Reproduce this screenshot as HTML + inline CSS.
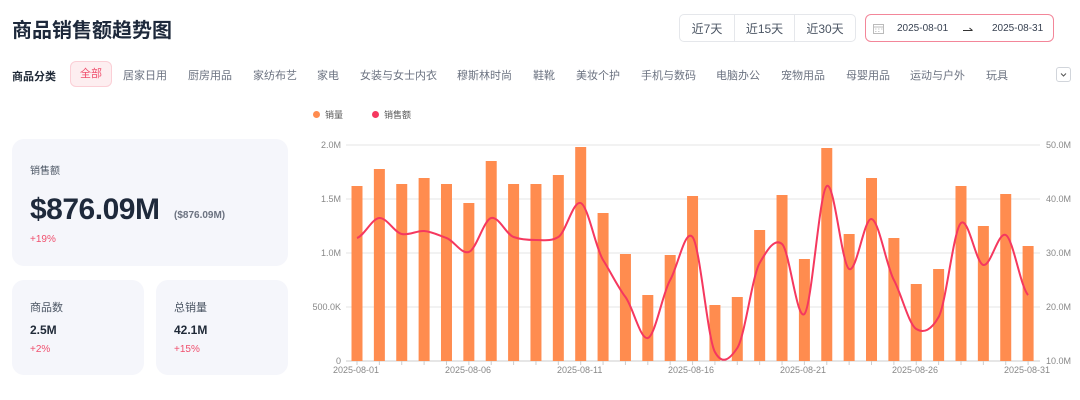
<!DOCTYPE html>
<html><head><meta charset="utf-8">
<style>
*{margin:0;padding:0;box-sizing:border-box}
body{width:1080px;height:400px;background:#fff;font-family:"Liberation Sans","Noto Sans CJK SC",sans-serif;position:relative;overflow:hidden;color:#1f2937}
.abs{position:absolute}
.title{left:12px;top:14px;font-size:20px;font-weight:bold;color:#1e293b}
.btns{left:679px;top:14px;width:177px;height:28px;border:1px solid #e5e7eb;border-radius:5px;display:flex;font-size:12px;color:#4b5563}
.btns div{display:flex;align-items:center;justify-content:center;border-right:1px solid #e5e7eb}
.btns div:last-child{border-right:none}
.date{left:865px;top:14px;width:189px;height:28px;border:1px solid #f38699;border-radius:6px;font-size:10px;color:#374151}
.cats{top:67px;font-size:11px;color:#6b7280}
.card{background:#f5f6fb;border-radius:12px}
.lbl{font-size:11px;color:#4b5563}
.red{color:#f0506e;font-size:10px}
.ax{font-size:9px;color:#888}
</style></head><body>
<div class="abs title">商品销售额趋势图</div>
<div class="abs btns"><div style="width:55px">近7天</div><div style="width:60px">近15天</div><div style="width:60px">近30天</div></div>
<div class="abs date">
<svg class="abs" style="left:7px;top:8px" width="11" height="11" viewBox="0 0 11 11"><rect x="0.5" y="1.5" width="10" height="9" fill="none" stroke="#bbb"/><line x1="0.5" y1="4" x2="10.5" y2="4" stroke="#bbb"/><g fill="#ccc"><rect x="2" y="5.5" width="1.5" height="1"/><rect x="5" y="5.5" width="1.5" height="1"/><rect x="8" y="5.5" width="1.5" height="1"/><rect x="2" y="8" width="1.5" height="1"/><rect x="5" y="8" width="1.5" height="1"/></g></svg>
<span class="abs" style="left:31px;top:8px">2025-08-01</span>
<svg class="abs" style="left:97px;top:11px" width="10" height="6" viewBox="0 0 10 6"><path d="M0 4.5H9.5M6.5 2L9.5 4.5" fill="none" stroke="#333" stroke-width="1"/></svg>
<span class="abs" style="left:126px;top:8px">2025-08-31</span>
</div>

<div class="abs cats" style="left:12px;font-weight:bold;color:#1f2937;top:68px">商品分类</div>
<div class="abs" style="left:70px;top:61px;width:42px;height:26px;background:#fdeef0;border:1px solid #fbcfd6;border-radius:6px;color:#f0506e;font-size:11px;text-align:center;line-height:24px">全部</div>
<div class="abs cats" style="left:123px">居家日用</div>
<div class="abs cats" style="left:188px">厨房用品</div>
<div class="abs cats" style="left:253px">家纺布艺</div>
<div class="abs cats" style="left:317px">家电</div>
<div class="abs cats" style="left:360px">女装与女士内衣</div>
<div class="abs cats" style="left:457px">穆斯林时尚</div>
<div class="abs cats" style="left:533px">鞋靴</div>
<div class="abs cats" style="left:576px">美妆个护</div>
<div class="abs cats" style="left:641px">手机与数码</div>
<div class="abs cats" style="left:716px">电脑办公</div>
<div class="abs cats" style="left:781px">宠物用品</div>
<div class="abs cats" style="left:846px">母婴用品</div>
<div class="abs cats" style="left:910px">运动与户外</div>
<div class="abs cats" style="left:986px">玩具</div>
<div class="abs" style="left:1056px;top:67px;width:15px;height:15px;border:1px solid #d1d5db;border-radius:3px"><svg width="13" height="13" viewBox="0 0 13 13"><path d="M4 5.5l2.5 2.5 2.5-2.5" fill="none" stroke="#555" stroke-width="1"/></svg></div>

<div class="abs card" style="left:12px;top:139px;width:276px;height:127px"></div>
<div class="abs lbl" style="left:30px;top:162px;font-size:10px">销售额</div>
<div class="abs" style="left:30px;top:193px;font-size:30px;font-weight:bold;color:#1e293b;letter-spacing:-0.5px">$876.09M</div>
<div class="abs" style="left:174px;top:210px;font-size:10px;font-weight:bold;color:#6b7280">($876.09M)</div>
<div class="abs red" style="left:30px;top:234px">+19%</div>

<div class="abs card" style="left:12px;top:280px;width:132px;height:95px"></div>
<div class="abs lbl" style="left:30px;top:299px">商品数</div>
<div class="abs" style="left:30px;top:323px;font-size:12px;font-weight:bold">2.5M</div>
<div class="abs red" style="left:30px;top:344px">+2%</div>
<div class="abs card" style="left:156px;top:280px;width:132px;height:95px"></div>
<div class="abs lbl" style="left:174px;top:299px">总销量</div>
<div class="abs" style="left:174px;top:323px;font-size:12px;font-weight:bold">42.1M</div>
<div class="abs red" style="left:174px;top:344px">+15%</div>

<div class="abs" style="left:313px;top:111px;width:7px;height:7px;border-radius:50%;background:#ff8c4f"></div>
<div class="abs" style="left:325px;top:108px;font-size:9px;color:#555">销量</div>
<div class="abs" style="left:372px;top:111px;width:7px;height:7px;border-radius:50%;background:#f5385f"></div>
<div class="abs" style="left:384px;top:108px;font-size:9px;color:#555">销售额</div>

<div class="abs ax" style="left:300px;top:140px;width:41px;text-align:right">2.0M</div>
<div class="abs ax" style="left:300px;top:194px;width:41px;text-align:right">1.5M</div>
<div class="abs ax" style="left:300px;top:248px;width:41px;text-align:right">1.0M</div>
<div class="abs ax" style="left:300px;top:302px;width:41px;text-align:right">500.0K</div>
<div class="abs ax" style="left:300px;top:356px;width:41px;text-align:right">0</div>
<div class="abs ax" style="left:1046px;top:140px">50.0M</div>
<div class="abs ax" style="left:1046px;top:194px">40.0M</div>
<div class="abs ax" style="left:1046px;top:248px">30.0M</div>
<div class="abs ax" style="left:1046px;top:302px">20.0M</div>
<div class="abs ax" style="left:1046px;top:356px">10.0M</div>
<div class="abs ax" style="left:333px;top:365px">2025-08-01</div>
<div class="abs ax" style="left:445px;top:365px">2025-08-06</div>
<div class="abs ax" style="left:557px;top:365px">2025-08-11</div>
<div class="abs ax" style="left:668px;top:365px">2025-08-16</div>
<div class="abs ax" style="left:780px;top:365px">2025-08-21</div>
<div class="abs ax" style="left:892px;top:365px">2025-08-26</div>
<div class="abs ax" style="left:1004px;top:365px">2025-08-31</div>

<svg id="ch" class="abs" style="left:0;top:0" width="1080" height="400"></svg>
<script>
var s=document.getElementById('ch'),h='';
[145,199,253,307].forEach(function(y){h+='<line x1="346" x2="1040" y1="'+y+'" y2="'+y+'" stroke="#e5e5e5"/>';});
h+='<line x1="346" x2="1040" y1="361" y2="361" stroke="#ccc"/>';
var b=[186,169,184,178,184,203,161,184,184,175,147,213,254,295,255,196,305,297,230,195,259,148,234,178,238,284,269,186,226,194,246];
var l=[238,218,234,231,238,252,218,237,240,237,203,260,297,338,280,237,352,348,263,244,314,186,269,219,280,329,317,223,265,235,295];
var X=function(i){return 357+i*22.37;};
for(var i=0;i<31;i++){h+='<rect x="'+(X(i)-5.5)+'" y="'+b[i]+'" width="11" height="'+(361-b[i])+'" fill="#ff8c4f"/>';
h+='<line x1="'+X(i)+'" x2="'+X(i)+'" y1="361" y2="365" stroke="#ccc"/>';}
var d='M'+X(0)+' '+l[0];
for(var i=0;i<30;i++){var p0=l[Math.max(i-1,0)],p1=l[i],p2=l[i+1],p3=l[Math.min(i+2,30)];var dx=22.37/3;
d+=' C'+(X(i)+dx)+' '+(p1+(p2-p0)/8)+' '+(X(i+1)-dx)+' '+(p2-(p3-p1)/8)+' '+X(i+1)+' '+p2;}
h+='<path d="'+d+'" fill="none" stroke="#f5385f" stroke-width="2"/>';
s.innerHTML=h;
</script>
</body></html>
